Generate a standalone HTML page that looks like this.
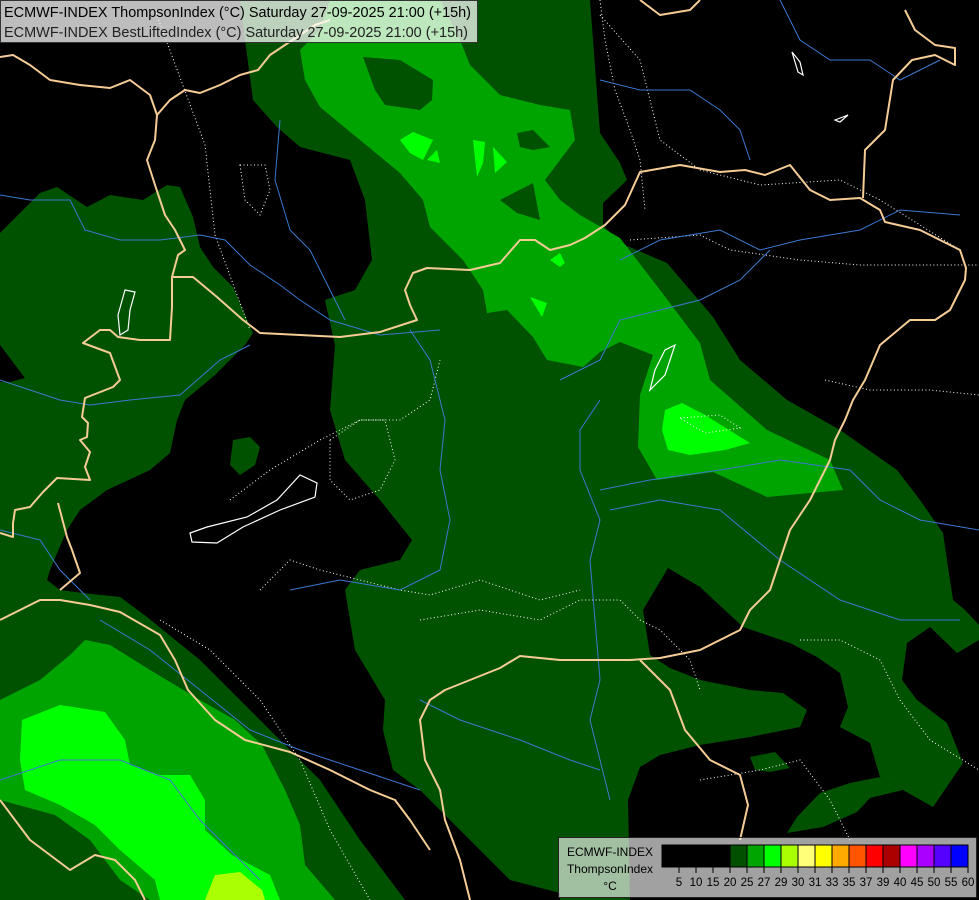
<!DOCTYPE html>
<html><head><meta charset="utf-8"><style>
html,body{margin:0;padding:0;background:#000;}
svg{display:block;}
text{font-family:"Liberation Sans",sans-serif;}
</style></head><body>
<svg width="979" height="900" viewBox="0 0 979 900" xmlns="http://www.w3.org/2000/svg">
<rect width="979" height="900" fill="#005200"/>
<!-- black areas -->
<g fill="#000">
<polygon points="0,0 240,0 245,40 253,100 277,127 300,147 350,160 365,200 372,260 355,290 325,300 335,345 330,410 345,460 380,500 412,540 400,560 360,570 345,590 355,650 385,700 383,730 393,770 420,790 470,840 510,880 560,893 560,900 405,900 360,840 320,780 260,720 200,660 147,617 120,597 83,593 60,590 47,580 50,570 67,530 80,510 107,490 150,470 170,453 177,420 185,400 215,375 245,345 253,333 233,287 213,267 200,247 193,217 180,187 167,185 143,200 110,195 87,207 57,187 40,193 0,233"/>
<polygon points="0,345 25,378 10,382 0,382"/>
<polygon points="590,0 979,0 979,625 965,610 953,600 948,567 943,533 920,500 897,470 840,430 787,400 740,360 713,317 667,263 620,243 603,225 603,203 627,180 620,163 600,133"/>
<polygon points="643,610 668,568 700,587 743,627 790,643 817,657 840,673 848,707 840,727 870,743 880,777 903,790 933,807 963,763 947,723 917,700 902,680 907,643 930,627 957,653 979,640 979,900 630,900 628,800 640,767 660,755 700,745 750,737 800,727 807,710 783,693 750,690 700,680 670,668 650,655"/>
</g>
<g fill="#005200">
<polygon points="233,440 250,437 260,447 255,465 240,475 230,465"/>
<polygon points="880,777 903,790 870,798 857,812 823,827 787,833 797,817 820,793 850,783"/>
<polygon points="750,757 775,752 790,768 770,772 755,770"/>
</g>
<!-- medium green -->
<g fill="#00a400">
<polygon points="300,50 320,30 330,0 440,0 460,40 470,65 500,95 540,105 570,110 575,140 545,180 560,200 580,215 620,238 660,290 700,343 710,380 767,430 830,460 843,490 767,497 713,472 657,480 638,447 640,395 653,355 620,342 600,352 583,367 547,360 533,337 507,310 487,313 483,290 463,260 430,227 423,200 400,173 360,140 320,107 305,80"/>
<polygon points="0,700 40,680 70,655 85,640 110,645 150,670 200,700 235,720 262,745 285,790 300,825 305,865 335,900 150,900 120,880 90,840 55,815 0,800"/>
</g>
<g fill="#005200">
<polygon points="363,57 400,60 433,80 432,100 420,110 385,105 375,90"/>
<polygon points="500,200 533,183 540,220 517,213"/>
<polygon points="517,133 533,130 550,147 533,150 520,147"/>
</g>
<!-- bright green -->
<g fill="#00ff00">
<polygon points="400,140 413,132 433,140 423,160 410,153"/>
<polygon points="427,160 437,150 440,163"/>
<polygon points="473,140 485,142 483,163 477,177"/>
<polygon points="493,147 507,162 495,173"/>
<polygon points="530,297 547,303 542,317"/>
<polygon points="550,260 560,253 565,263 560,267"/>
<polygon points="665,410 682,403 705,415 750,443 725,450 690,455 668,450 662,430"/>
<polygon points="22,720 60,705 105,712 125,740 130,765 160,775 190,775 205,800 205,830 232,855 270,875 280,900 160,900 155,880 120,850 95,825 60,805 25,790 20,760"/>
</g>
<polygon points="205,900 215,875 240,872 262,890 265,900" fill="#aaff00"/>
<!-- white dotted contours -->
<g fill="none" stroke="#fff" stroke-width="1" stroke-dasharray="1 2.5">
<path d="M155,10 L205,145 L215,235 L250,330 M160,620 L210,650 L260,700 L300,760 L330,830 L370,900"/>
<path d="M600,0 L605,40 L615,90 L630,130 L640,160 L645,210"/>
<path d="M600,15 L640,60 L660,140 L700,170 L760,185 L840,180 L880,200 L960,250"/>
<path d="M825,380 L870,390 L930,390 L979,395"/>
<path d="M630,240 L700,235 L730,250 L800,260 L860,265 L979,265"/>
<path d="M260,590 L290,560 L320,570 L360,580 L400,590 L430,595 L480,580 L540,600 L580,590"/>
<path d="M230,500 L270,470 L320,440 L360,420 L400,420 L430,400 L440,360"/>
<path d="M420,620 L480,610 L540,620 L580,600 L620,600 L640,620 L660,630 L690,660 L700,690"/>
<path d="M800,640 L840,640 L880,660 L900,700 L930,740 L979,770"/>
<path d="M700,780 L760,770 L800,760 L830,800 L850,840"/>
<path d="M240,165 L245,200 L260,215 L270,190 L265,165 Z"/>
<path d="M330,440 L360,420 L385,420 L395,460 L380,490 L350,500 L330,480 Z"/>
<path d="M680,418 L720,415 L740,428 L705,433 Z"/>
</g>
<!-- rivers -->
<g fill="none" stroke="#3c78d0" stroke-width="1">
<path d="M0,195 L30,200 L70,200 L85,230 L120,240 L160,240 L200,235 L225,240 L250,265 L280,285 L300,300 L330,320 L380,335 L440,330"/>
<path d="M0,380 L30,390 L60,400 L90,405 L130,400 L180,395 L220,360 L250,345"/>
<path d="M0,780 L60,760 L120,760 L170,780 L200,820 L230,850 L260,880"/>
<path d="M280,120 L275,180 L290,230 L310,250 L330,290 L345,320"/>
<path d="M100,620 L150,650 L200,690 L250,730 L300,750 L360,770 L420,790"/>
<path d="M290,590 L340,580 L400,590 L440,570 L450,520 L440,470 L445,420 L430,360 L410,330"/>
<path d="M600,400 L580,430 L580,470 L600,520 L590,560 L595,620 L600,680 L590,720 L600,760 L610,800"/>
<path d="M600,490 L650,480 L720,470 L780,460 L850,470 L880,500 L920,520 L979,530"/>
<path d="M610,510 L660,500 L720,510 L780,560 L840,600 L900,620 L960,620"/>
<path d="M620,260 L660,240 L720,230 L760,250 L800,240 L860,230 L900,210 L960,215"/>
<path d="M600,80 L640,90 L690,90 L720,110 L740,130 L750,160"/>
<path d="M420,700 L460,720 L520,740 L570,760 L600,770"/>
<path d="M560,380 L600,360 L620,320 L660,310 L700,300 L740,280 L770,250"/>
<path d="M780,0 L800,40 L830,60 L870,60 L900,80 L940,60"/>
<path d="M0,530 L40,540 L60,570 L90,600"/>
</g>
<!-- borders -->
<g fill="none" stroke="#f5cc96" stroke-width="2" stroke-linejoin="round">
<path d="M0,57 L13,55 L30,65 L50,80 L80,85 L110,88 L130,80 L150,95 L157,115 L155,140 L147,160 L155,185 L165,215 L175,230 L185,250 L178,255 L172,277 L172,307 L170,340 L140,340 L118,337 L110,330 L100,330 L83,343 L110,353 L120,380 L113,387 L85,398 L82,417 L88,423 L87,437 L80,440 L90,452 L85,467 L90,480 L57,478 L43,492 L30,507 L15,510 L13,523 L13,537 L0,533"/>
<path d="M157,115 L170,100 L185,90 L200,93 L220,85 L240,75 L258,70 L270,55 L285,45 L300,35 L315,25 L330,20"/>
<path d="M172,277 L193,277 L217,297 L243,320 L260,333 L300,335 L340,337 L380,332 L417,320 L410,305 L405,290 L413,273 L427,268 L470,270 L500,263 L520,240 L535,240 L550,250 L570,245 L585,238 L605,225 L625,205 L640,172 L680,165 L720,172 L745,170 L765,175 L790,165 L810,190 L830,200 L860,198 L880,210 L885,222 L920,230 L960,250 L966,268 L965,280 L950,310 L935,320 L910,320 L880,345 L865,380 L853,400 L845,420 L835,440 L830,460 L820,480 L810,500 L800,515 L790,530 L780,560 L770,590 L750,610 L740,630 L700,650 L660,658 L630,660 L600,660 L560,660 L520,656 L500,668 L470,680 L445,690 L430,700 L420,720 L425,760 L440,790 L445,820 L460,860 L470,900"/>
<path d="M863,198 L865,150 L885,130 L893,80 L912,60 L935,55 L955,65 L955,48 L935,45 L915,30 L905,10"/>
<path d="M60,590 L80,573 L72,550 L67,537 L58,503"/>
<path d="M0,620 L20,610 L40,600 L60,600 L90,605 L120,612 L160,635 L175,660 L188,690 L215,720 L245,740 L290,752 L330,770 L370,790 L395,800 L410,820 L430,850"/>
<path d="M640,660 L670,690 L685,730 L710,760 L740,775 L748,805 L740,840"/>
<path d="M0,800 L30,840 L70,870 L95,855 L115,860 L135,880 L145,900"/>
<path d="M640,0 L660,15 L690,10 L700,0"/>
</g>
<!-- white outlines (lakes) -->
<g fill="none" stroke="#fff" stroke-width="1.2">
<path d="M190,533 L207,527 L247,517 L277,500 L300,475 L317,483 L315,497 L280,510 L243,527 L217,543 L192,542 Z"/>
<path d="M125,290 L135,292 L130,310 L128,330 L120,335 L118,315 Z"/>
<path d="M792,52 L800,62 L803,75 L798,72 Z"/>
<path d="M835,120 L848,115 L840,122 Z"/>
<path d="M655,370 L665,350 L675,345 L665,375 L650,390 Z"/>
</g>
<!-- header -->
<rect x="0.5" y="0.5" width="477" height="42" fill="rgba(255,255,255,0.74)" stroke="#333" stroke-width="1"/>
<text x="4" y="17" font-size="14.5" fill="#000" textLength="467" lengthAdjust="spacingAndGlyphs">ECMWF-INDEX ThompsonIndex (°C) Saturday 27-09-2025 21:00 (+15h)</text>
<text x="4" y="37" font-size="14.5" fill="#222" textLength="464" lengthAdjust="spacingAndGlyphs">ECMWF-INDEX BestLiftedIndex (°C) Saturday 27-09-2025 21:00 (+15h)</text>
<!-- legend -->
<rect x="558.5" y="837.5" width="418" height="60" fill="rgba(255,255,255,0.63)" stroke="#222" stroke-width="1"/>
<text x="610" y="856" font-size="12" text-anchor="middle" fill="#000">ECMWF-INDEX</text>
<text x="610" y="873" font-size="12" text-anchor="middle" fill="#000">ThompsonIndex</text>
<text x="610" y="890" font-size="12" text-anchor="middle" fill="#000">°C</text>
<g stroke="#000" stroke-width="1">
<rect x="662" y="845" width="17" height="22" fill="#000"/>
<rect x="679" y="845" width="17" height="22" fill="#000"/>
<rect x="696" y="845" width="17" height="22" fill="#000"/>
<rect x="713" y="845" width="17" height="22" fill="#000"/>
<rect x="730" y="845" width="17" height="22" fill="#005000"/>
<rect x="747" y="845" width="17" height="22" fill="#00a500"/>
<rect x="764" y="845" width="17" height="22" fill="#00ff00"/>
<rect x="781" y="845" width="17" height="22" fill="#aaff00"/>
<rect x="798" y="845" width="17" height="22" fill="#ffff78"/>
<rect x="815" y="845" width="17" height="22" fill="#ffff00"/>
<rect x="832" y="845" width="17" height="22" fill="#ffaa00"/>
<rect x="849" y="845" width="17" height="22" fill="#ff5500"/>
<rect x="866" y="845" width="17" height="22" fill="#ff0000"/>
<rect x="883" y="845" width="17" height="22" fill="#aa0000"/>
<rect x="900" y="845" width="17" height="22" fill="#ff00ff"/>
<rect x="917" y="845" width="17" height="22" fill="#aa00ff"/>
<rect x="934" y="845" width="17" height="22" fill="#5500ff"/>
<rect x="951" y="845" width="17" height="22" fill="#0000ff"/>
<path d="M679,867v6M696,867v6M713,867v6M730,867v6M747,867v6M764,867v6M781,867v6M798,867v6M815,867v6M832,867v6M849,867v6M866,867v6M883,867v6M900,867v6M917,867v6M934,867v6M951,867v6M968,867v6"/>
</g>
<g font-size="11.5" fill="#000" text-anchor="middle">
<text x="679" y="886">5</text><text x="696" y="886">10</text><text x="713" y="886">15</text><text x="730" y="886">20</text><text x="747" y="886">25</text><text x="764" y="886">27</text><text x="781" y="886">29</text><text x="798" y="886">30</text><text x="815" y="886">31</text><text x="832" y="886">33</text><text x="849" y="886">35</text><text x="866" y="886">37</text><text x="883" y="886">39</text><text x="900" y="886">40</text><text x="917" y="886">45</text><text x="934" y="886">50</text><text x="951" y="886">55</text><text x="968" y="886">60</text>
</g>
</svg>
</body></html>
